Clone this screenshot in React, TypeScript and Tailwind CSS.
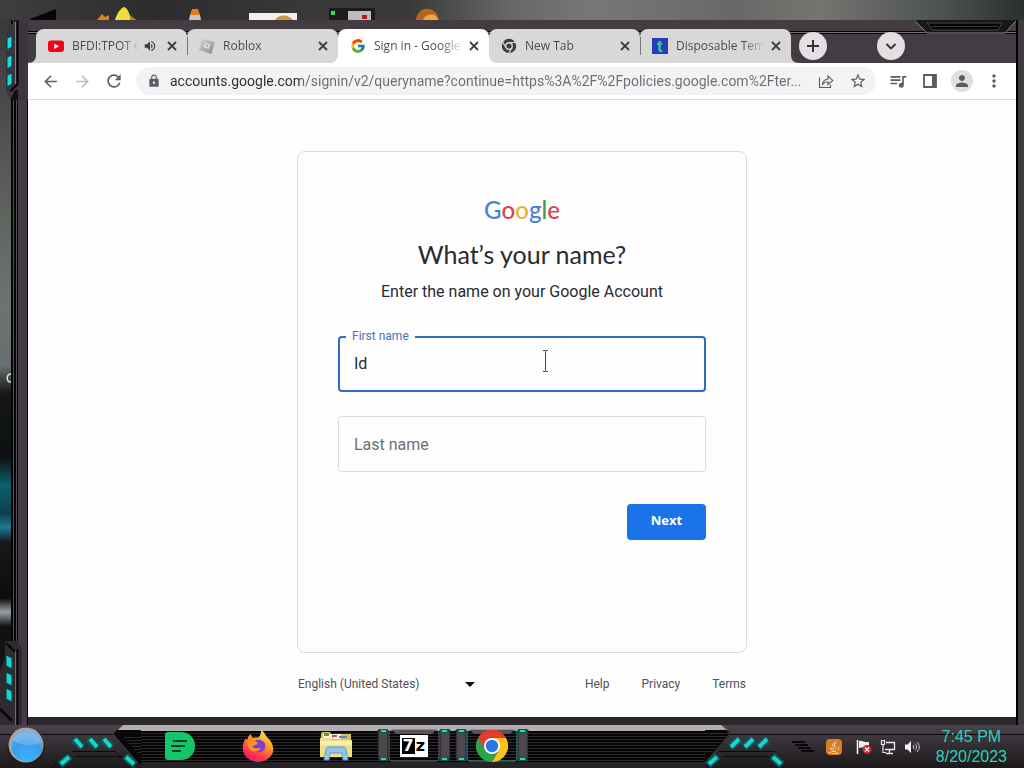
import React, { useState } from 'react';
import { FcGoogle } from 'react-icons/fc';
import { FaJava } from 'react-icons/fa';
import {
  MdArrowBack,
  MdArrowForward,
  MdLock,
  MdMoreVert,
  MdPerson,
  MdQueueMusic,
  MdRefresh,
  MdStarBorder,
  MdVolumeUp,
} from 'react-icons/md';

const tabs = [
  { id: 1, title: 'BFDI:TPOT 6', icon: 'youtube', audio: true },
  { id: 2, title: 'Roblox', icon: 'roblox' },
  { id: 3, title: 'Sign in - Google', icon: 'google' },
  { id: 4, title: 'New Tab', icon: 'chrome' },
  { id: 5, title: 'Disposable Temp', icon: 'temp' },
];

const pageUrl =
  'accounts.google.com/signin/v2/queryname?continue=https%3A%2F%2Fpolicies.google.com%2Fter...';

function Favicon({ name }: { name: string }) {
  if (name === 'youtube') {
    return (
      <svg className="h-4 w-4 shrink-0" viewBox="0 0 16 16">
        <rect x="0" y="2.5" width="16" height="11.5" rx="3" fill="#f00214" />
        <path d="M6.2 5.4v5.6L11 8.2z" fill="#fff" />
      </svg>
    );
  }
  if (name === 'roblox') {
    return (
      <svg className="h-4 w-4 shrink-0" viewBox="0 0 16 16">
        <defs>
          <linearGradient id="rbx" x1="0" y1="0" x2="1" y2="1">
            <stop offset="0" stopColor="#d6d9de" />
            <stop offset="1" stopColor="#858b93" />
          </linearGradient>
        </defs>
        <path d="M3 0.5L16 4l-3.500 12L0 12z" fill="url(#rbx)" />
        <path d="M6 5l5 1.200-1.200 4.500-5-1.200z" fill="#dfe2e6" />
        <path d="M7.500 6.800l2 .5-.5 2-2-.5z" fill="#a3a8af" />
      </svg>
    );
  }
  if (name === 'google') {
    return <FcGoogle className="h-4 w-4 shrink-0" />;
  }
  if (name === 'chrome') {
    return (
      <svg className="h-4 w-4 shrink-0" viewBox="0 0 16 16">
        <circle cx="8" cy="8" r="7.2" fill="#3c4043" />
        <circle cx="8" cy="8" r="3.9" fill="#d9d9d9" />
        <circle cx="8" cy="8" r="2.6" fill="#3c4043" />
        <path d="M8 4.5h7M5 9.7L1.6 4M11 9.7L7.6 15.4" stroke="#d9d9d9" strokeWidth="1.2" />
      </svg>
    );
  }
  return (
    <span className="flex h-4 w-4 shrink-0 items-center justify-center bg-[#2a3bb5] font-['Inter'] text-base leading-4 font-bold text-[#22d39a]">
      t
    </span>
  );
}

function BrowserTab({ tab, active }: { tab: (typeof tabs)[number]; active: boolean }) {
  return (
    <div
      className={`relative flex h-[34px] w-[151px] min-w-0 items-center rounded-t-lg pr-2 pl-3 ${
        active
          ? "bg-white before:absolute before:bottom-0 before:-left-2 before:size-2 before:bg-white before:content-[''] after:absolute after:-right-2 after:bottom-0 after:size-2 after:bg-white after:content-['']"
          : 'z-10 bg-[#d9d8d9]'
      } ${tab.id === 2 ? 'rounded-br-lg' : ''} ${tab.id === 4 ? 'rounded-bl-lg' : ''}`}
    >
      {(tab.id === 2 || tab.id === 5) && <span className="absolute left-0 h-[18px] w-px bg-[#77747a]" />}
      <Favicon name={tab.icon} />
      <button className="ml-2 min-w-0 flex-1 overflow-hidden bg-linear-to-r from-[#45474a] from-75% to-transparent bg-clip-text text-left text-xs whitespace-nowrap text-transparent">
        {tab.title}
      </button>
      {tab.audio && <MdVolumeUp className="mx-1 h-3.5 w-3.5 shrink-0 text-[#3c4043]" />}
      <button aria-label={`Close ${tab.title}`} className="ml-1 shrink-0">
        <svg className="h-3.5 w-3.5" viewBox="0 0 14 14">
          <path d="M3 3l8 8M11 3l-8 8" stroke="#3c4043" strokeWidth="1.8" />
        </svg>
      </button>
    </div>
  );
}

function TitleBar() {
  return (
    <div className="relative flex h-[43px] shrink-0 items-end bg-[#443c43]">
      <div className="absolute inset-x-0 top-[11px] h-[3px] border-y border-black bg-[#77707a]" />
      <svg className="absolute top-0 right-0 h-[15px] w-[101px]" viewBox="0 0 101 15">
        <path d="M0 0h101L90 14H12z" fill="#1a171a" />
        <path d="M0 1l12 12h78L101 1" fill="none" stroke="#8b868d" />
        <path d="M12 3h75l-4 7H18z" fill="#050505" stroke="#4a454c" />
        <path d="M17 6.5h66" stroke="#3d383f" />
      </svg>
      <svg className="h-2 w-2" viewBox="0 0 8 8">
        <path d="M8 0v8H0c5 0 8-3 8-8z" fill="#d9d8d9" />
      </svg>
      {tabs.map((tab) => (
        <BrowserTab key={tab.id} tab={tab} active={tab.id === 3} />
      ))}
      <svg className="z-10 h-2 w-2" viewBox="0 0 8 8">
        <path d="M0 0v8h8C3 8 0 5 0 0z" fill="#d9d8d9" />
      </svg>
      <button
        aria-label="New tab"
        className="relative mb-[3px] flex h-7 w-7 items-center justify-center rounded-full bg-[#e3dfe2]"
      >
        <svg className="h-3 w-3" viewBox="0 0 12 12">
          <path d="M6 0v12M0 6h12" stroke="#333" strokeWidth="2" />
        </svg>
      </button>
      <button
        aria-label="Search tabs"
        className="relative mr-[111px] mb-[3px] ml-auto flex h-7 w-7 items-center justify-center rounded-full bg-[#e3dfe2]"
      >
        <svg className="h-3 w-3" viewBox="0 0 12 12">
          <path d="M1.5 4L6 8.5 10.5 4" fill="none" stroke="#333" strokeWidth="1.8" />
        </svg>
      </button>
    </div>
  );
}

function ToolButton({ label, children }: { label: string; children: React.ReactNode }) {
  return (
    <button aria-label={label} className="flex h-7 w-8 shrink-0 items-center justify-center text-[#5a5d61]">
      {children}
    </button>
  );
}

function Toolbar() {
  return (
    <div className="flex h-[37px] shrink-0 items-center border-b border-[#dcdddf] bg-white px-1.5">
      <ToolButton label="Back">
        <MdArrowBack className="h-[19px] w-[19px]" />
      </ToolButton>
      <ToolButton label="Forward">
        <MdArrowForward className="h-[19px] w-[19px] text-[#bbbcbe]" />
      </ToolButton>
      <ToolButton label="Reload">
        <MdRefresh className="h-5 w-5" />
      </ToolButton>
      <div className="mx-1.5 flex h-7 min-w-0 flex-1 items-center rounded-full bg-[#f1f3f4] pr-0.5">
        <div className="flex w-[34px] shrink-0 justify-center pl-0.5">
          <MdLock className="h-3.5 w-3.5 text-[#5a5d61]" />
        </div>
        <input
          aria-label="Address"
          readOnly
          value={pageUrl}
          className="min-w-0 flex-1 bg-[linear-gradient(90deg,#2b2d30_131px,#6a6d71_131px)] bg-clip-text font-['Roboto',sans-serif] text-sm text-transparent outline-none"
        />
        <ToolButton label="Share">
          <svg className="h-4 w-4" viewBox="0 0 16 16" fill="none" stroke="currentColor" strokeWidth="1.1">
            <path d="M1.500 4.500v10h11v-3" />
            <path d="M4.500 11.500C5 8 7 6.200 10 6V3l4.800 4.400L10 11.500V8.800c-2.500 0-4 .8-5.500 2.700z" />
          </svg>
        </ToolButton>
        <ToolButton label="Bookmark">
          <MdStarBorder className="h-[18px] w-[18px]" />
        </ToolButton>
      </div>
      <ToolButton label="Media">
        <MdQueueMusic className="h-5 w-5" />
      </ToolButton>
      <ToolButton label="Side panel">
        <svg className="h-4 w-4" viewBox="0 0 16 16">
          <path d="M2 2h12v12H2z" fill="none" stroke="currentColor" strokeWidth="1.8" />
          <path d="M10 2h4v12h-4z" fill="currentColor" />
        </svg>
      </ToolButton>
      <ToolButton label="Profile">
        <span className="flex h-[22px] w-[22px] items-center justify-center rounded-full bg-[#dde0e3]">
          <MdPerson className="h-[18px] w-[18px]" />
        </span>
      </ToolButton>
      <ToolButton label="Menu">
        <MdMoreVert className="h-5 w-5" />
      </ToolButton>
    </div>
  );
}

function SignInPage() {
  const [firstName, setFirstName] = useState('Id');
  const [lastName, setLastName] = useState('');

  return (
    <div className="flex flex-1 flex-col items-center bg-[#fefefe] pt-[51px] font-['Roboto',sans-serif]">
      <form
        onSubmit={(e) => e.preventDefault()}
        className="flex h-[502px] w-[450px] flex-col rounded-lg border border-[#dadce0] px-10 pt-[46px] text-[#2a2b2e]"
      >
        <div className="flex h-6 items-center justify-center font-['Lato',sans-serif] text-2xl leading-6 font-medium">
          <span className="text-[#4a7fe0]">G</span>
          <span className="text-[#d9434b]">o</span>
          <span className="text-[#e9b428]">o</span>
          <span className="text-[#4a7fe0]">g</span>
          <span className="text-[#3f9a58]">l</span>
          <span className="text-[#d9434b]">e</span>
        </div>
        <h1 className="mt-4 text-center font-['Lato',sans-serif] text-[25px] leading-8">What’s your name?</h1>
        <p className="mt-2.5 text-center text-base">Enter the name on your Google Account</p>

        <div className="relative mt-8">
          <label htmlFor="first" className="absolute -top-2 left-2 bg-[#fefefe] px-1.5 text-xs text-[#4a70ba]">
            First name
          </label>
          <input
            id="first"
            value={firstName}
            onChange={(e) => setFirstName(e.target.value)}
            className="block h-14 w-full rounded border-2 border-[#306bc3] px-3.5 pb-0.5 text-base outline-none"
          />
          {/* text cursor */}
          <svg className="absolute top-3.5 left-[203px] h-[22px] w-[9px]" viewBox="0 0 9 22">
            <path d="M2 .5h2l.5.5.5-.5h2M2 21.500h2l.5-.5.5.5h2M4.500 1v20" fill="none" stroke="#2b4a66" />
          </svg>
        </div>
        <input
          aria-label="Last name"
          placeholder="Last name"
          value={lastName}
          onChange={(e) => setLastName(e.target.value)}
          className="mt-6 h-14 w-full rounded border border-[#dadce0] px-[15px] text-base outline-none placeholder:text-[#6d6f72]"
        />
        <button className="mt-8 h-9 w-[79px] self-end rounded bg-[#1a73e8] pb-0.5 font-['Open_Sans',sans-serif] text-[13px] font-bold text-white">
          Next
        </button>
      </form>

      <footer className="flex w-[450px] items-center justify-between pt-[23px] pr-px text-xs text-[#4f5154]">
        <div className="relative">
          <select
            aria-label="Language"
            className="w-[180px] appearance-none bg-transparent pl-px outline-none"
          >
            <option>English (United States)</option>
          </select>
          <svg className="pointer-events-none absolute top-1.5 right-0.5 h-[5px] w-2.5" viewBox="0 0 10 5">
            <path d="M0 0h10L5 5z" fill="#111" />
          </svg>
        </div>
        <div className="flex gap-8">
          <a href="#help">Help</a>
          <a href="#privacy">Privacy</a>
          <a href="#terms">Terms</a>
        </div>
      </footer>
    </div>
  );
}

function DesktopStrip() {
  return (
    <div className="h-5 shrink-0 bg-[linear-gradient(90deg,#3e3f3d_0%,#2c2c2c_15%,#393939_30%,#3a3a3a_40%,#686867_50%,#777776_58%,#686966_72%,#737571_80%,#4e524f_92%,#2a302d_100%)]">
      {/* bottoms of the desktop icons, cut off by the window */}
      <svg className="block h-5 w-[450px]" viewBox="0 0 450 20">
        <path d="M30 19l26-10v11H30z" fill="#070707" />
        <path d="M97 20l5-6 3 3 4-2v5z" fill="#d98324" />
        <path d="M115 20c2-7 6-12 9-13 3 1 5 5 6 9l6 4z" fill="#f3dc3a" />
        <path d="M130 15l6 5h-6z" fill="#b77b20" />
        <path d="M192 9h6l2 6h-10z" fill="#e57b1f" />
        <path d="M190 15h10l1 5h-12z" fill="#c9c5c5" />
        <path d="M249 13h48v7h-48z" fill="#f3f1f0" />
        <path d="M275 20c3-6 14-6 18 0z" fill="#cf9444" />
        <path d="M329 8h46v12h-46z" fill="#1b1d1b" />
        <path d="M331 11h4v4h-4z" fill="#30e05a" />
        <path d="M348 11h23v9h-23z" fill="#bfbcbc" />
        <path d="M362 15h5v4h-5z" fill="#b61b22" />
        <path d="M416 20c1-8 7-12 12-11 6 0 10 5 11 11z" fill="#b06a17" />
        <path d="M423 20c2-6 12-8 15-1v1z" fill="#f0a64a" />
      </svg>
    </div>
  );
}

function LeftFrame() {
  return (
    <div className="relative flex w-7 shrink-0 border-r border-black bg-[#433b43]">
      <div className="w-[11px] bg-[linear-gradient(180deg,#383939_0%,#4c4d4b_13%,#60645f_28%,#6d7370_40%,#667070_49%,#151718_53%,#0d1112_62%,#0d6070_66%,#0b3f4b_70%,#1d7a96_72%,#17191b_74%,#0c0c0e_82%,#9a9ea3_84%,#111_86%,#1c181d_100%)]" />
      <div className="w-[7px] bg-[repeating-linear-gradient(90deg,#050505_0px,#050505_2px,#544e55_2px,#544e55_3px)]" />
      <svg className="absolute top-0 left-0 h-20 w-9" viewBox="0 0 36 80">
        <path d="M6 10L16 0h20v12l-8 12v56H12L6 72z" fill="#3c353d" />
        <path d="M17.500 0v64l-7 7M28 0l12 12" fill="none" stroke="#050505" strokeWidth="2" />
        <path d="M15.500 2v62" stroke="#857d87" />
        <path d="M7 18l5-2v11l-5 3zM7 37l5-2v11l-5 3zM7 55l5-2v11l-5 3z" fill="#19dbe2" stroke="#0a3d42" />
        <path d="M10 80l5-10h3v10z" fill="#111" />
      </svg>
      <svg className="absolute bottom-0 left-0 h-[84px] w-[27px]" viewBox="0 0 27 84">
        <path d="M5 0h12l5 8v76H0V30L5 18z" fill="#302a31" />
        <path d="M17.500 8v76M6 2l10 10" fill="none" stroke="#080808" strokeWidth="2" />
        <path d="M15.500 10v74" stroke="#6e6770" />
        <path d="M6 14l6 3v11l-6-3zM6 31l6 3v11l-6-3zM6 47l6 3v11l-6-3z" fill="#17d3cf" stroke="#083a3c" />
        <path d="M0 68l12 12" stroke="#0a0a0a" strokeWidth="3" />
      </svg>
      <svg className="absolute top-1/2 left-1.5 h-2.5 w-1.5" viewBox="0 0 6 10">
        <path d="M5 1C0 1 0 9 5 9" fill="none" stroke="#e2e4e4" strokeWidth="1.5" />
      </svg>
    </div>
  );
}

function GreenNoteIcon() {
  return (
    <svg className="h-7 w-[30px]" viewBox="0 0 30 28">
      <path d="M0 3a3 3 0 0 1 3-3h13c8 0 14 6 14 14s-6 14-14 14H3a3 3 0 0 1-3-3z" fill="#11c769" />
      <path d="M8 9h14M6 14h14M7 19h9" stroke="#0b3d22" strokeWidth="2" />
    </svg>
  );
}

function FirefoxIcon() {
  return (
    <svg className="h-8 w-8" viewBox="0 0 32 32">
      <defs>
        <linearGradient id="fox" x1="0.8" y1="0" x2="0.3" y2="1">
          <stop offset="0" stopColor="#fff04a" />
          <stop offset="0.4" stopColor="#ff9a1f" />
          <stop offset="0.75" stopColor="#ff3a4c" />
          <stop offset="1" stopColor="#e41a72" />
        </linearGradient>
      </defs>
      <path
        d="M19 0c3 2 4 4 5 6l2 2c4 4 6 9 5 14-2 6-8 10-15 10S2 27 1 20c-1-5 1-9 3-12 0 0 0 2 1 2 1-3 2-5 4-6 0 2 1 3 2 4 3-1 5 0 6-1 2-2 2-5 2-7z"
        fill="url(#fox)"
      />
      <path d="M10 14c1-3 5-5 8-4 5 1 6 5 5 8-1 4-5 5-8 4-4-1-6-4-5-8z" fill="#7a3fd8" />
      <path d="M6 12c3-2 6-2 9 0 1 1 0 3-2 3-1 0-2 1-3 2 3 2 7 1 9 1-2 4-8 5-11 1-2-2-3-4-2-7z" fill="#ff9226" />
    </svg>
  );
}

function ExplorerIcon() {
  return (
    <svg className="h-[30px] w-8" viewBox="0 0 32 30">
      <path d="M1 3l1-2h8l1 2h20v8H1z" fill="#d8c15a" />
      <path d="M3 3h9v5H3zM13 3h8v5h-8z" fill="#f4f6ee" />
      <path d="M4 2h5v3H4z" fill="#4f9e4a" />
      <path d="M12 4h5v2h-5z" fill="#c4543a" />
      <path d="M19 5h8v2h-8z" fill="#5a86b8" />
      <path d="M0 7h10l2 2h20v17H0z" fill="#f3de88" />
      <path d="M0 10h32v4H0z" fill="#fbeeb0" />
      <path d="M6 19c0-2 1-3 3-3h14c2 0 3 1 3 3l2 10h-5l-1-7H10l-1 7H4z" fill="#8fc7ea" stroke="#5b9bc9" />
    </svg>
  );
}

function SevenZipIcon() {
  return (
    <span className="flex h-[22px] w-7 items-center justify-center bg-white font-['DejaVu_Sans',sans-serif] text-base leading-4 font-bold">
      <span className="h-4 w-[13px] bg-black text-center text-white">7</span>
      <span className="w-3 text-center text-black">z</span>
    </span>
  );
}

function ChromeIcon() {
  return (
    <svg className="h-8 w-8" viewBox="0 0 32 32">
      <path d="M16 16L2.1 8A16 16 0 0 1 29.9 8z" fill="#e33b2e" />
      <path d="M16 16L2.1 8A16 16 0 0 0 16 32l6.9-12z" fill="#2ba24c" />
      <path d="M16 16l6.9 4L16 32A16 16 0 0 0 29.9 8H16z" fill="#fcc31e" />
      <path d="M2.1 8l7 12L16 8h13.9A16 16 0 0 0 2.1 8z" fill="#e33b2e" />
      <circle cx="16" cy="16" r="8" fill="#fff" />
      <circle cx="16" cy="16" r="6.2" fill="#2a74e6" />
    </svg>
  );
}

function ButtonFrame({ lit }: { lit?: boolean }) {
  return (
    <svg className="absolute inset-x-0 top-0 h-[37px] w-full" viewBox="0 0 78 37">
      <path d="M3 5h10v29H3zM65 5h10v29H65z" fill="#4f4750" stroke="#1d1a1d" />
      <path
        d="M16 5h46l2 3v26l-2 2H16l-2-2V8z"
        fill="none"
        stroke={lit ? '#2f9c90' : '#6a646b'}
        strokeWidth="1"
      />
      <path d="M17 5h44l-4 4H21z" fill="#59535a" />
      <path d="M4 6h9M65 6h9M4 34h9M65 34h9" stroke="#0c5b4a" strokeWidth="4" />
      <path d="M6 6h5M67 6h5M6 34h5M67 34h5" stroke="#2fd8b0" strokeWidth="2" />
    </svg>
  );
}

const pinned = [
  { name: 'Notes', icon: <GreenNoteIcon /> },
  { name: 'Firefox', icon: <FirefoxIcon /> },
  { name: 'Explorer', icon: <ExplorerIcon /> },
  { name: '7-Zip', icon: <SevenZipIcon />, open: true },
  { name: 'Chrome', icon: <ChromeIcon />, open: true, lit: true },
];

function Taskbar() {
  return (
    <div className="flex h-[43px] shrink-0 bg-linear-to-b from-[#4b434b] to-[#1b191b]">
      <button aria-label="Start" className="w-[141px] shrink-0">
        <svg className="block h-[43px] w-[141px]" viewBox="0 0 141 43">
          <defs>
            <radialGradient id="orb" cx="0.5" cy="0.9" r="0.9">
              <stop offset="0" stopColor="#37b4ff" />
              <stop offset="0.6" stopColor="#3d9bea" />
              <stop offset="1" stopColor="#7fb8ea" />
            </radialGradient>
          </defs>
          <path d="M0 9.5h113" stroke="#0b0a0b" />
          <path d="M123 0h18v6h-24z" fill="#b3aeb1" />
          <path d="M117 5h24v33h-4L113 9z" fill="#070707" />
          <path d="M113 9l25 29" stroke="#4a444b" />
          <path d="M124 12.5h17M127 15.5h14M129 18.5h12M132 21.5h9M134 24.5h7M137 27.5h4" stroke="#2b292b" />
          <path d="M72 26.5h43l16 16M52 43l16-16M76 31.5h47" fill="none" stroke="#0a090a" />
          <path d="M73 14l10 8M88 14l10 8M102 14l10 8M60 40l10-9M125 31l10 9" stroke="#0c5b58" strokeWidth="8" />
          <path d="M75 14l7 8M90 14l7 8M104 14l7 8M61 39l8-7M126 32l8 7" stroke="#1fd3cb" strokeWidth="4" />
          <circle cx="26" cy="21" r="18.5" fill="#1c191c" />
          <circle cx="26" cy="20" r="17.5" fill="#a7a3a4" />
          <circle cx="27" cy="21" r="15.5" fill="url(#orb)" />
          <path d="M13 15c4-9 24-10 28 2-8 5-20 4-28-2z" fill="#a5cdec" opacity="0.4" />
        </svg>
      </button>

      <div className="flex min-w-0 flex-1 border-t-[6px] border-b-[6px] border-t-[#b3aeb1] border-b-[#262326] bg-[repeating-linear-gradient(180deg,#050505_0px,#050505_2px,#2b292b_2px,#2b292b_3px)]">
        {pinned.map((app) => (
          <button
            key={app.name}
            aria-label={app.name}
            className="relative -mt-1.5 flex h-[41px] w-[78px] items-center justify-center"
          >
            {app.open && <ButtonFrame lit={app.lit} />}
            <span className="relative">{app.icon}</span>
          </button>
        ))}
      </div>

      <svg className="block h-[43px] w-20 shrink-0" viewBox="0 0 80 43">
        <path d="M0 0h17l7 6H0z" fill="#b3aeb1" />
        <path d="M0 5h23l3 4L0 38z" fill="#070707" />
        <path d="M0 8.5h24M0 11.5h22M0 14.5h19M0 17.5h16M0 20.5h13M0 23.5h11M0 26.5h8" stroke="#2b292b" />
        <path d="M17 0l8 9L0 38" fill="none" stroke="#4a444b" />
        <path d="M25 9.5h55M14 26.5h56M19 31.5h44l12 11" fill="none" stroke="#0a090a" />
        <path d="M25 22l10-8M39 22l10-8M53 22l10-8M3 40l10-9M67 31l10 9" stroke="#0c5b58" strokeWidth="8" />
        <path d="M26 22l8-8M40 22l8-8M54 22l8-8M4 39l8-7M68 32l8 7" stroke="#1fd3cb" strokeWidth="4" />
      </svg>

      <div className="flex shrink-0 items-center bg-[linear-gradient(180deg,transparent_9px,#0b0a0b_9px,#0b0a0b_10px,transparent_10px)] pr-[17px] pl-[7px]">
        <svg className="h-3 w-6" viewBox="0 0 24 12">
          <path d="M0 1h13M3 4h13M6 7h13M9 10h13" stroke="#080808" strokeWidth="2" />
        </svg>
        <span className="ml-2.5 flex h-4 w-4 items-center justify-center rounded-sm bg-[#d97d20] text-white">
          <FaJava className="h-3.5 w-3.5" />
        </span>
        <svg className="ml-3.5 h-4 w-4" viewBox="0 0 16 16">
          <path d="M1.500 1v14" stroke="#fff" strokeWidth="1.5" />
          <path d="M3 2c3-1 4 1 7 1h3v6c-4 0-6-1-10 0z" fill="#f3f0f0" />
          <circle cx="11" cy="10.5" r="4.5" fill="#cf2430" />
          <path d="M9 8.500l4 4m0-4l-4 4" stroke="#fff" strokeWidth="1.4" />
        </svg>
        <svg className="ml-2 h-4 w-4" viewBox="0 0 16 16" fill="none" stroke="#ece9ec">
          <path d="M6 3.500h8.500v7H5M9.500 11v3M6 14.500h7" strokeWidth="1.3" />
          <path d="M1.500 1.500h3v4h-3zM3 6v7.500h3" strokeWidth="1.2" />
        </svg>
        <svg className="ml-2 h-4 w-4" viewBox="0 0 16 16">
          <path d="M1 5.500h2.500L7 2v12l-3.500-3.500H1z" fill="#f3f1f3" />
          <path d="M9 6c1 1 1 3 0 4M11 4.500c2 2 2 5 0 7M13 3c3 3 3 7 0 10" fill="none" stroke="#cfccd0" />
        </svg>
        <time className="ml-4 text-center font-['Liberation_Sans',sans-serif] text-base leading-5 text-[#2fd0ba]">
          7:45 PM
          <br />
          8/20/2023
        </time>
      </div>
    </div>
  );
}

function App() {
  return (
    <div className="flex h-screen min-h-[768px] flex-col overflow-hidden bg-[#222] font-['Open_Sans','Noto_Sans',sans-serif]">
      <DesktopStrip />
      <div className="flex flex-1">
        <LeftFrame />
        <main className="flex min-w-0 flex-1 flex-col border-b-8 border-[#2b272b]">
          <TitleBar />
          <Toolbar />
          <SignInPage />
        </main>
        <div className="w-2 shrink-0 border-l-2 border-black bg-[#3f3a3f]" />
      </div>
      <Taskbar />
    </div>
  );
}

export default App;
